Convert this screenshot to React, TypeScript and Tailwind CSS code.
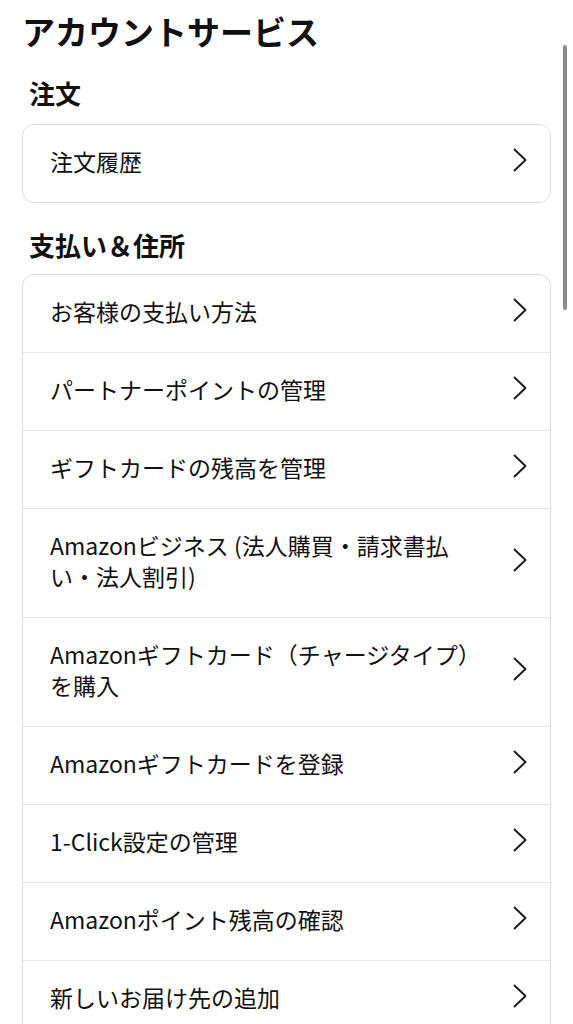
import { ReactNode } from 'react';

interface MenuItem {
    id: string;
    label: ReactNode;
}

const orderItems: MenuItem[] = [
    { id: 'history', label: '注文履歴' },
];

const paymentItems: MenuItem[] = [
    { id: 'methods', label: 'お客様の支払い方法' },
    { id: 'partner', label: 'パートナーポイントの管理' },
    { id: 'gift-balance', label: 'ギフトカードの残高を管理' },
    {
        id: 'business',
        label: (
            <>
                Amazonビジネス (法人購買・請求書払
                <br />
                い・法人割引)
            </>
        ),
    },
    {
        id: 'gift-charge',
        label: (
            <>
                Amazonギフトカード（チャージタイプ）
                <br />
                を購入
            </>
        ),
    },
    { id: 'gift-register', label: 'Amazonギフトカードを登録' },
    { id: 'one-click', label: '1-Click設定の管理' },
    { id: 'points', label: 'Amazonポイント残高の確認' },
    { id: 'address', label: '新しいお届け先の追加' },
];

function Chevron() {
    return (
        <svg width="14" height="24" viewBox="0 0 14 24" fill="none" className="shrink-0 -mt-[3px]">
            <polyline
                points="1.5,1.5 12.5,12 1.5,22.5"
                stroke="#1a1a1a"
                strokeWidth="1.9"
                strokeLinecap="round"
                strokeLinejoin="round"
            />
        </svg>
    );
}

function MenuCard({ items }: { items: MenuItem[] }) {
    return (
        <div className="bg-white rounded-xl border border-[#dcdcdc] overflow-hidden">
            {items.map((item, i) => (
                <div
                    key={item.id}
                    className={`flex items-center justify-between pl-[27px] pr-[23px] pt-[21px] pb-[25px] ${
                        i < items.length - 1 ? 'border-b border-[#e6e6e6]' : ''
                    }`}
                >
                    <span className="text-[23px] leading-[31px] text-[#111111] pr-2">{item.label}</span>
                    <Chevron />
                </div>
            ))}
        </div>
    );
}

export default function App() {
    return (
        <div
            className="relative h-[1024px] overflow-hidden bg-white px-[22px] pt-[11px]"
            style={{ fontFamily: '"Noto Sans CJK JP", "Noto Sans", sans-serif' }}
        >
            <h1 className="text-[33px] leading-[40px] font-bold text-[#111111]">アカウントサービス</h1>

            <h2 className="mt-[26px] px-[7px] text-[26px] leading-[32px] font-bold text-[#111111]">注文</h2>
            <div className="mt-[15px]">
                <MenuCard items={orderItems} />
            </div>

            <h2 className="mt-[26px] px-[7px] text-[26px] leading-[32px] font-bold text-[#111111]">
                支払い＆住所
            </h2>
            <div className="mt-[13px]">
                <MenuCard items={paymentItems} />
            </div>

            {/* scroll indicator */}
            <div className="absolute left-[563px] top-[45px] w-[4px] h-[265px] rounded-full bg-[#8a8a8a]" />
        </div>
    );
}
